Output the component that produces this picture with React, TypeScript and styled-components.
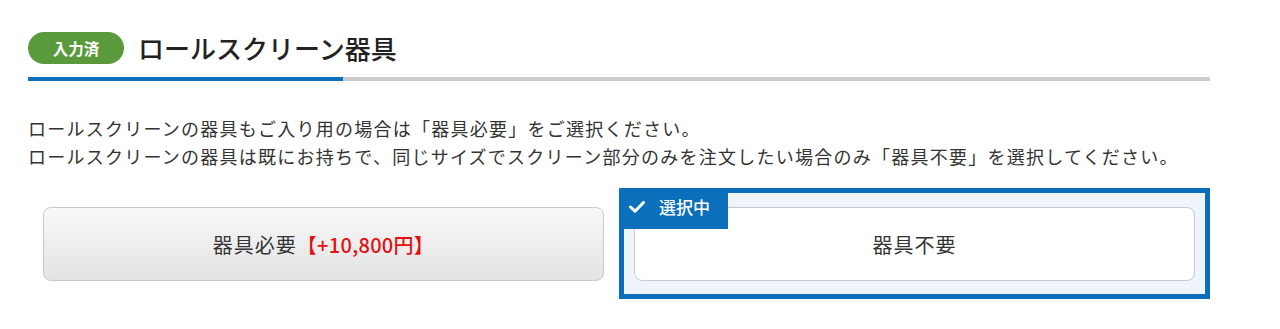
import React from "react";
import styled, { createGlobalStyle } from "styled-components";

const Global = createGlobalStyle`
  html, body { margin: 0; padding: 0; background: #fff; }
  body { font-family: "Noto Sans CJK JP", "Noto Sans", sans-serif; color: #333; }
`;

const Page = styled.div`
  width: 1182px;
  padding: 32px 0 0 28px;
`;

const Header = styled.div`
  position: relative;
  display: flex;
  align-items: center;
  gap: 14px;
  padding-bottom: 13px;
  border-bottom: 4px solid #cccccc;
  &::after {
    content: "";
    position: absolute;
    left: 0;
    bottom: -4px;
    width: 315px;
    height: 4px;
    background: #0b6fbb;
  }
`;

const DoneBadge = styled.span`
  display: inline-flex;
  align-items: center;
  justify-content: center;
  width: 96px;
  height: 32px;
  border-radius: 16px;
  background: #5a9a3c;
  color: #fff;
  font-size: 15.5px;
  font-weight: 700;
`;

const Title = styled.h2`
  margin: 0;
  font-size: 26px;
  font-weight: 500;
  color: #222;
  line-height: 32px;
`;

const Note = styled.p`
  margin: 33px 0 0;
  font-size: 18px;
  letter-spacing: 1.25px;
  line-height: 28px;
  color: #333;
`;

const Options = styled.div`
  display: grid;
  grid-template-columns: 1fr 1fr;
  margin-top: 18px;
`;

const Cell = styled.div<{ $selected?: boolean }>`
  position: relative;
  box-sizing: border-box;
  padding: ${(p) => (p.$selected ? "14px 10px 13px" : "19px 15px 18px")};
  border: ${(p) => (p.$selected ? "5px solid #0b6fbb" : "none")};
  background: ${(p) => (p.$selected ? "#eef4fa" : "transparent")};
`;

const OptionButton = styled.button<{ $selected?: boolean }>`
  display: flex;
  align-items: center;
  justify-content: center;
  width: 100%;
  height: 74px;
  box-sizing: border-box;
  border: 1px solid #c9c9c9;
  border-radius: 8px;
  background: ${(p) =>
    p.$selected ? "#ffffff" : "linear-gradient(#f8f8f8, #e3e3e3)"};
  font-family: inherit;
  font-size: 20px;
  letter-spacing: 1px;
  color: #333;
  cursor: pointer;
`;

const Price = styled.span`
  color: #e3100f;
  font-weight: 500;
  letter-spacing: 0.3px;
`;

const SelectedTag = styled.span`
  position: absolute;
  top: -5px;
  left: -5px;
  display: flex;
  align-items: center;
  gap: 14px;
  box-sizing: border-box;
  width: 109px;
  height: 41px;
  padding: 0 0 4px 10px;
  background: #0b6fbb;
  color: #fff;
  font-size: 17px;
  font-weight: 500;
`;

const Check = () => (
  <svg width="16" height="12" viewBox="0 0 16 12" fill="none">
    <path d="M1.5 6 L6 10.2 L14.5 1.5" stroke="#fff" strokeWidth="3" strokeLinecap="round" strokeLinejoin="round" />
  </svg>
);

export default function App() {
  return (
    <Page>
      <Global />
      <Header>
        <DoneBadge>入力済</DoneBadge>
        <Title>ロールスクリーン器具</Title>
      </Header>
      <Note>
        ロールスクリーンの器具もご入り用の場合は「器具必要」をご選択ください。
        <br />
        ロールスクリーンの器具は既にお持ちで、同じサイズでスクリーン部分のみを注文したい場合のみ「器具不要」を選択してください。
      </Note>
      <Options>
        <Cell>
          <OptionButton>
            器具必要<Price>【+10,800円】</Price>
          </OptionButton>
        </Cell>
        <Cell $selected>
          <SelectedTag>
            <Check />
            選択中
          </SelectedTag>
          <OptionButton $selected>器具不要</OptionButton>
        </Cell>
      </Options>
    </Page>
  );
}
